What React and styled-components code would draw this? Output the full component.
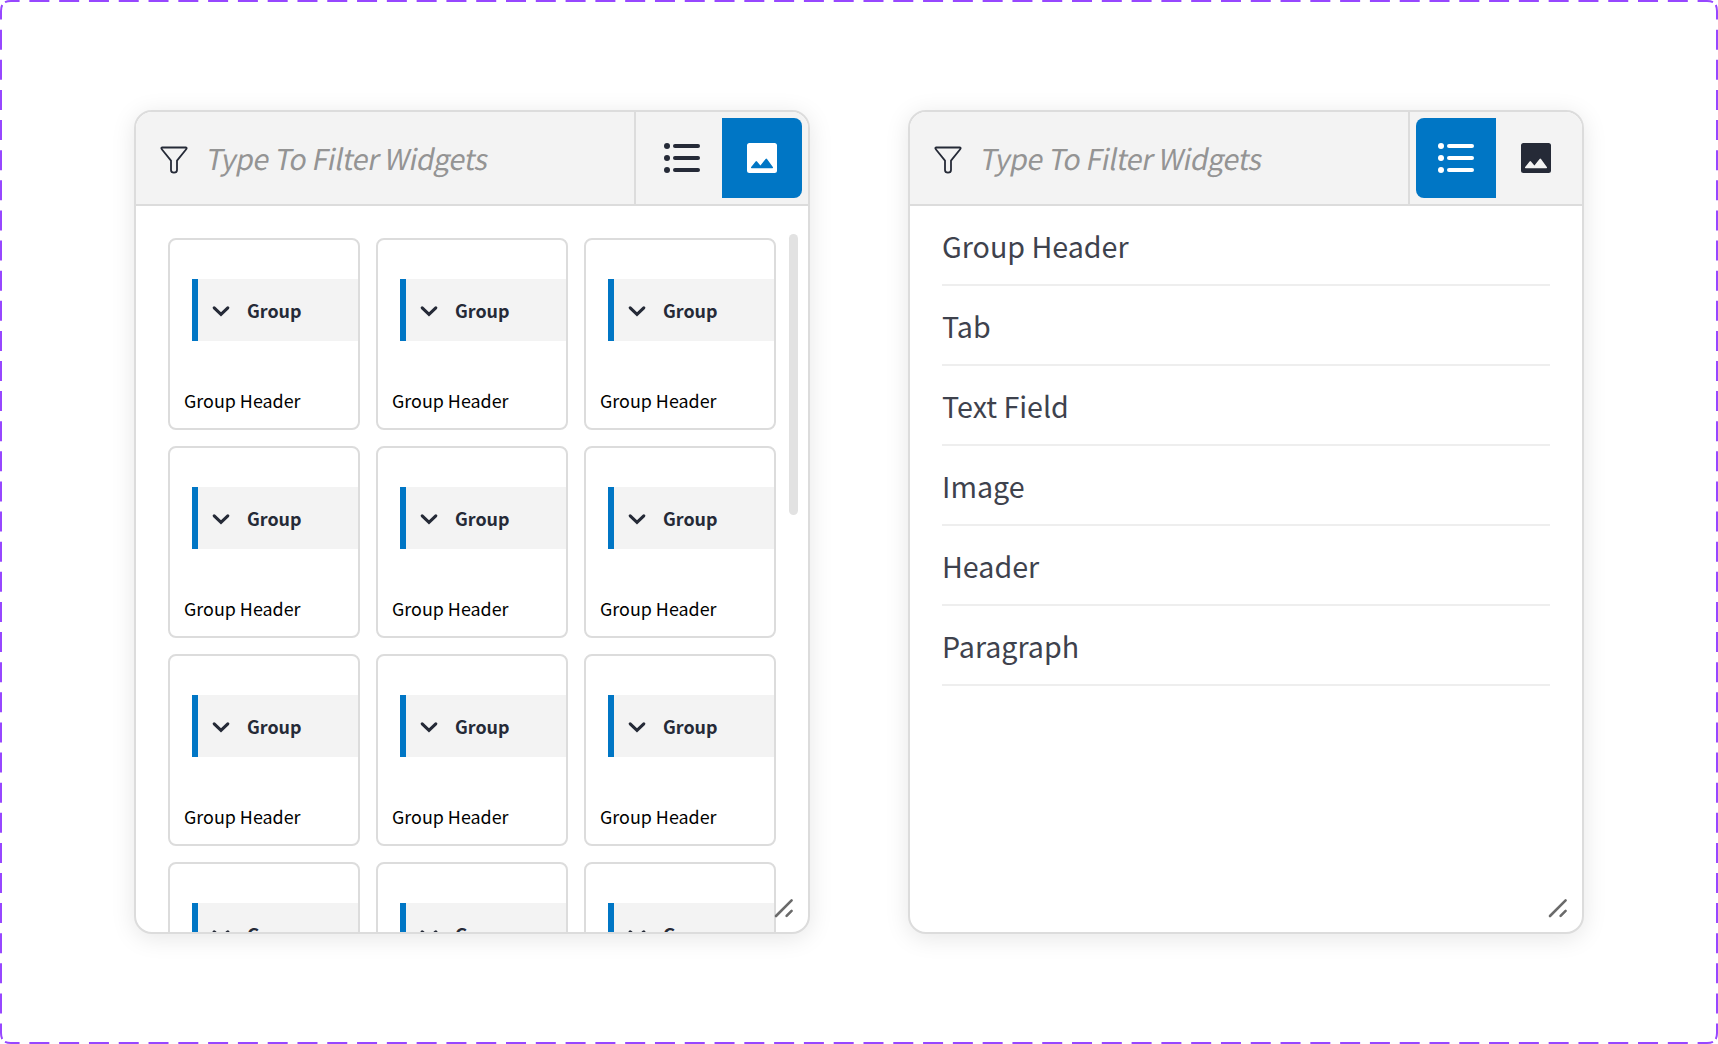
import React from "react";
import styled, { createGlobalStyle } from "styled-components";

const sans = `"Noto Sans CJK SC", "Noto Sans", sans-serif`;
const ink = "#252A37";

const GlobalStyle = createGlobalStyle`
  *, *::before, *::after { box-sizing: border-box; }
  body { margin: 0; background: #fff; font-family: ${sans}; }
`;

const Canvas = styled.main`
  position: relative;
  width: 1718px;
  height: 1044px;
  padding: 110px 134px;
  display: flex;
  align-items: flex-start;
  gap: 98px;
  overflow: hidden;
`;

const Outline = styled.svg`
  position: absolute;
  inset: 0;
  pointer-events: none;
`;

const Panel = styled.section`
  position: relative;
  display: flex;
  flex-direction: column;
  width: 676px;
  height: 824px;
  border: 2px solid #dcdcdc;
  border-radius: 18px;
  background: #fff;
  overflow: hidden;
  box-shadow: 0 4px 24px rgba(0, 0, 0, 0.1);
`;

const Header = styled.header`
  flex: none;
  display: flex;
  height: 94px;
  background: #f3f3f3;
  border-bottom: 2px solid #dcdcdc;
`;

const Filter = styled.label`
  flex: 1;
  display: flex;
  align-items: center;
  padding: 0 0 0 24px;
  border-right: 2px solid #dcdcdc;
`;

const FilterIcon = styled.svg`
  flex: none;
  width: 28px;
  height: 28px;
  margin: 3px 19px 0 0;
`;

const Placeholder = styled.span`
  font-size: 28.65px;
  font-weight: 400;
  line-height: 40px;
  color: #949494;
  white-space: nowrap;
  letter-spacing: -0.45px;
  transform: translateY(-0.4px) skewX(-11deg);
`;

const Toggle = styled.div`
  flex: none;
  display: flex;
  padding: 6px;
`;

const ToggleButton = styled.button`
  width: 80px;
  height: 80px;
  padding: 0;
  border: 0;
  display: grid;
  place-items: center;
  border-radius: ${(p) => (p.$side === "left" ? "8px 0 0 8px" : "0 8px 8px 0")};
  background: ${(p) => (p.$active ? "#0076C5" : "transparent")};
  color: ${(p) => (p.$active ? "#fff" : ink)};
`;

const Body = styled.div`
  flex: 1;
  min-height: 0;
  overflow: hidden;
  padding: ${(p) => (p.$list ? "0 32px" : "32px")};
`;

const Grid = styled.div`
  display: grid;
  grid-template-columns: repeat(3, 192px);
  grid-auto-rows: 192px;
  gap: 16px;
`;

const Card = styled.article`
  display: flex;
  flex-direction: column;
  border: 2px solid #dcdcdc;
  border-radius: 8px;
  overflow: hidden;
  padding-top: 39px;
`;

const GroupBar = styled.div`
  flex: none;
  display: flex;
  align-items: center;
  height: 62px;
  margin-left: 22px;
  padding-left: 14px;
  border-left: 6px solid #0076c5;
  background: #f3f3f3;
`;

const GroupTitle = styled.span`
  margin-left: 17px;
  font-size: 17.9px;
  font-weight: 700;
  line-height: 26px;
  color: ${ink};
  transform: translateY(-0.3px) skewX(-0.02deg);
`;

const CardLabel = styled.span`
  margin: 45px 0 0 14px;
  font-size: 17.9px;
  line-height: 28px;
  color: #000;
`;

const Scrollbar = styled.div`
  position: absolute;
  top: 122px;
  right: 10px;
  width: 9px;
  height: 281px;
  border-radius: 5px;
  background: #e2e2e2;
`;

const ResizeHandle = styled.svg`
  position: absolute;
  right: 14px;
  bottom: 14px;
  width: 20px;
  height: 20px;
`;

const Row = styled.div`
  display: flex;
  align-items: center;
  height: 80px;
  padding-top: 2px;
  border-bottom: 2px solid #eee;
  font-size: 28.65px;
  line-height: 40px;
  color: #3e424d;
`;

function ListIcon() {
  return (
    <svg width="36" height="30" viewBox="0 0 36 30" fill="currentColor">
      {[3, 15, 27].map((y) => (
        <g key={y}>
          <circle cx="3" cy={y} r="3" />
          <rect x="9" y={y - 2} width="27" height="4" rx="2" />
        </g>
      ))}
    </svg>
  );
}

function ImageIcon() {
  return (
    <svg width="30" height="30" viewBox="0 0 30 30" fill="currentColor">
      <path
        fillRule="evenodd"
        d="M2.5 0H27.5Q30 0 30 2.5V27.5Q30 30 27.5 30H2.5Q0 30 0 27.5V2.5Q0 0 2.5 0ZM4.6 25.2H25.4Q26.4 25 25.8 24L20 16Q19.3 15.2 18.6 16L13.4 22.6L10 18.4Q9.3 17.7 8.6 18.4L4.2 24Q3.6 25 4.6 25.2Z"
      />
    </svg>
  );
}

function Chevron() {
  return (
    <svg width="18" height="14" viewBox="0 0 18 14" fill="none">
      <path d="M2.2 4.8L9 11.3L15.8 4.8" stroke={ink} strokeWidth="3.1" strokeLinecap="round" />
    </svg>
  );
}

function WidgetPanel({ view, children }) {
  return (
    <Panel>
      <Header>
        <Filter>
          <FilterIcon viewBox="0 0 28 28" fill="none">
            <path
              d="M2.2 1.5H25.8Q27.3 1.8 26.2 3.2L17 14.6V24Q17 26.6 14 26.6Q11 26.6 11 24V14.6L1.8 3.2Q0.7 1.8 2.2 1.5Z"
              stroke={ink}
              strokeWidth="1.8"
              strokeLinejoin="round"
            />
          </FilterIcon>
          <Placeholder>Type To Filter Widgets</Placeholder>
        </Filter>
        <Toggle>
          <ToggleButton $side="left" $active={view === "list"} aria-label="List">
            <ListIcon />
          </ToggleButton>
          <ToggleButton $side="right" $active={view === "image"} aria-label="Image">
            <ImageIcon />
          </ToggleButton>
        </Toggle>
      </Header>
      {children}
      <ResizeHandle viewBox="0 0 20 20" fill="none">
        <path d="M2 18L17.6 2.4M12.6 17.8L17.6 12.8" stroke="#6b6b6b" strokeWidth="2.6" strokeLinecap="round" />
      </ResizeHandle>
    </Panel>
  );
}

const widgets = ["Group Header", "Tab", "Text Field", "Image", "Header", "Paragraph"];

export default function App() {
  return (
    <>
      <GlobalStyle />
      <Canvas>
        <WidgetPanel view="image">
          <Body>
            <Grid>
              {Array.from({ length: 12 }, (_, i) => (
                <Card key={i}>
                  <GroupBar>
                    <Chevron />
                    <GroupTitle>Group</GroupTitle>
                  </GroupBar>
                  <CardLabel>Group Header</CardLabel>
                </Card>
              ))}
            </Grid>
          </Body>
          <Scrollbar />
        </WidgetPanel>
        <WidgetPanel view="list">
          <Body $list>
            {widgets.map((name) => (
              <Row key={name}>{name}</Row>
            ))}
          </Body>
        </WidgetPanel>
        <Outline width="1718" height="1044" fill="none" stroke="#9747FF" strokeWidth="2">
          <path
            d="M5 2.2Q7.5 1 11 1H1707Q1710.5 1 1713 2.2M5 1041.8Q7.5 1043 11 1043H1707Q1710.5 1043 1713 1041.8"
            strokeDasharray="20 9.79"
            strokeDashoffset="5.3"
          />
          <path
            d="M2.2 5Q1 7.5 1 11V1033Q1 1036.5 2.2 1039M1715.8 5Q1717 7.5 1717 11V1033Q1717 1036.5 1715.8 1039"
            strokeDasharray="20 10.118"
            strokeDashoffset="5.3"
          />
        </Outline>
      </Canvas>
    </>
  );
}
